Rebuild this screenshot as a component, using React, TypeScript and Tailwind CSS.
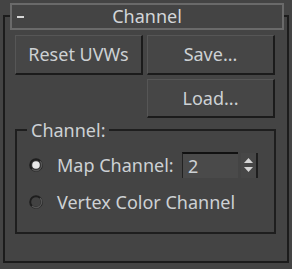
import React from "react";

const font = { fontFamily: '"Noto Sans", "DejaVu Sans", sans-serif' };

function Btn({ label, className }: { label: string; className: string }) {
  return (
    <div
      className={
        "flex items-center justify-center bg-[#464646] border-t border-l border-t-[#565656] border-l-[#565656] border-r-2 border-b-2 border-r-[#1b1b1b] border-b-[#1b1b1b] text-[18px] text-[#cdd1d4] " +
        className
      }
    >
      {label}
    </div>
  );
}

function Radio({ checked }: { checked: boolean }) {
  return (
    <svg width="14" height="14" viewBox="0 0 14 14" className="shrink-0">
      <circle cx="7" cy="7" r="5.8" fill={checked ? "#3a3a3a" : "#424242"} stroke="#1e1e1e" strokeWidth="2" />
      <path d="M11.1 2.9 A5.8 5.8 0 0 1 2.9 11.1" fill="none" stroke="#555" strokeWidth="1.4" />
      {checked && <circle cx="7" cy="7" r="3.8" fill="#e8e8e8" />}
    </svg>
  );
}

export default function App() {
  return (
    <div className="w-[292px] h-[269px] bg-[#444444] pt-[15px] pl-[3px]" style={font}>
      <div className="w-[286px] h-[248px] border-2 border-[#1c1c1c] flex flex-col">
        <div className="ml-[5px] mt-[-14px] w-[274px] h-[27px] border-2 border-[#6a6a6a] bg-[#444444] relative flex items-center justify-center text-[18px] text-[#d3d6d9]">
          <span className="absolute left-[5px] top-[11px] w-[7px] h-[2px] bg-[#d8d8d8]" />
          <span>Channel</span>
        </div>
        <div className="flex ml-[10px] mt-[5px] gap-[4px]">
          <Btn label="Reset UVWs" className="w-[128px] h-[40px]" />
          <Btn label="Save..." className="w-[128px] h-[40px]" />
        </div>
        <div className="flex ml-[142px] mt-[4px]">
          <Btn label="Load..." className="w-[128px] h-[39px]" />
        </div>
        <div className="relative ml-[10px] mt-[11px] w-[261px] h-[105px] border-2 border-[#1e1e1e] pt-[21px] pl-[12px]">
          <span className="absolute left-[10px] top-[-14px] bg-[#444444] px-[4px] text-[18px] text-[#cdd1d4] leading-[26px]">
            Channel:
          </span>
          <div className="flex items-center h-[26px]">
            <Radio checked />
            <span className="ml-[14px] w-[125px] text-[18px] text-[#cdd1d4]">Map Channel:</span>
            <div className="w-[56px] h-[26px] bg-[#4a4a4a] border-t-2 border-l border-t-[#111] border-l-[#222] flex items-center pl-[5px] text-[18px] text-[#cdd1d4]">
              2
            </div>
            <div className="ml-[3px] w-[17px] h-[25px] bg-[#474747] border-r-2 border-r-[#1e1e1e] flex flex-col items-center justify-center gap-[4px]">
              <svg width="9" height="5" viewBox="0 0 9 5"><path d="M4.5 0 L9 5 L0 5 Z" fill="#d6d6d6" /></svg>
              <svg width="9" height="5" viewBox="0 0 9 5"><path d="M0 0 L9 0 L4.5 5 Z" fill="#d6d6d6" /></svg>
            </div>
          </div>
          <div className="flex items-center h-[26px] mt-[11px]">
            <Radio checked={false} />
            <span className="ml-[14px] text-[18px] text-[#cdd1d4]">Vertex Color Channel</span>
          </div>
        </div>
      </div>
    </div>
  );
}
